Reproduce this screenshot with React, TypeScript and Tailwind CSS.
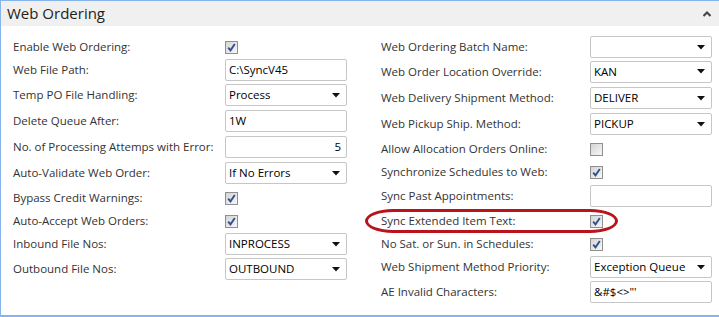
import type { ReactNode } from 'react';

type Field =
  | { kind: 'check'; checked: boolean }
  | { kind: 'text'; value: string; align?: 'right' }
  | { kind: 'select'; value: string };

interface Row {
  label: string;
  field: Field;
  h: string;
  circled?: boolean;
}

const leftRows: Row[] = [
  { label: 'Enable Web Ordering:', field: { kind: 'check', checked: true }, h: 'h-[22px]' },
  { label: 'Web File Path:', field: { kind: 'text', value: 'C:\\SyncV45' }, h: 'h-[24px]' },
  { label: 'Temp PO File Handling:', field: { kind: 'select', value: 'Process' }, h: 'h-[26px]' },
  { label: 'Delete Queue After:', field: { kind: 'text', value: '1W' }, h: 'h-[26px]' },
  { label: 'No. of Processing Attemps with Error:', field: { kind: 'text', value: '5', align: 'right' }, h: 'h-[26px]' },
  { label: 'Auto-Validate Web Order:', field: { kind: 'select', value: 'If No Errors' }, h: 'h-[26px]' },
  { label: 'Bypass Credit Warnings:', field: { kind: 'check', checked: true }, h: 'h-[24px]' },
  { label: 'Auto-Accept Web Orders:', field: { kind: 'check', checked: true }, h: 'h-[22px]' },
  { label: 'Inbound File Nos:', field: { kind: 'select', value: 'INPROCESS' }, h: 'h-[24px]' },
  { label: 'Outbound File Nos:', field: { kind: 'select', value: 'OUTBOUND' }, h: 'h-[26px]' },
];

const rightRows: Row[] = [
  { label: 'Web Ordering Batch Name:', field: { kind: 'select', value: '' }, h: 'h-[22px]' },
  { label: 'Web Order Location Override:', field: { kind: 'select', value: 'KAN' }, h: 'h-[27px]' },
  { label: 'Web Delivery Shipment Method:', field: { kind: 'select', value: 'DELIVER' }, h: 'h-[26px]' },
  { label: 'Web Pickup Ship. Method:', field: { kind: 'select', value: 'PICKUP' }, h: 'h-[26px]' },
  { label: 'Allow Allocation Orders Online:', field: { kind: 'check', checked: false }, h: 'h-[24px]' },
  { label: 'Synchronize Schedules to Web:', field: { kind: 'check', checked: true }, h: 'h-[22px]' },
  { label: 'Sync Past Appointments:', field: { kind: 'text', value: '' }, h: 'h-[26px]' },
  { label: 'Sync Extended Item Text:', field: { kind: 'check', checked: true }, h: 'h-[24px]', circled: true },
  { label: 'No Sat. or Sun. in Schedules:', field: { kind: 'check', checked: true }, h: 'h-[22px]' },
  { label: 'Web Shipment Method Priority:', field: { kind: 'select', value: 'Exception Queue' }, h: 'h-[24px]' },
  { label: 'AE Invalid Characters:', field: { kind: 'text', value: '&#$<>"\'' }, h: 'h-[26px]' },
];

function CheckBox({ checked }: { checked: boolean }) {
  return (
    <div className="w-[13px] h-[13px] border border-[#8f8f8f] bg-gradient-to-br from-[#d4d4d4] to-[#f7f7f7] flex items-center justify-center">
      {checked && (
        <svg width="9" height="9" viewBox="0 0 9 9">
          <path d="M1.2 4.6 L3.5 7.4 L7.8 1" fill="none" stroke="#33508f" strokeWidth="1.9" />
        </svg>
      )}
    </div>
  );
}

function Box({ children, right }: { children?: ReactNode; right?: boolean }) {
  return (
    <div
      className={`w-[122px] h-[22px] border border-[#c6c6c6] rounded-[2px] bg-white flex items-center px-[3px] text-[11.5px] text-black ${
        right ? 'justify-end' : 'justify-between'
      }`}
    >
      {children}
    </div>
  );
}

function FieldView({ field }: { field: Field }) {
  if (field.kind === 'check') return <CheckBox checked={field.checked} />;
  if (field.kind === 'text')
    return (
      <Box right={field.align === 'right'}>
        <span className="pr-[2px]">{field.value}</span>
      </Box>
    );
  return (
    <Box>
      <span>{field.value}</span>
      <svg width="8" height="5" viewBox="0 0 8 5" className="mr-[3px] shrink-0">
        <path d="M0 0 H8 L4 4.5 Z" fill="#111" />
      </svg>
    </Box>
  );
}

function Column({ rows, labelW }: { rows: Row[]; labelW: string }) {
  return (
    <div className="flex flex-col">
      {rows.map((r) => (
        <div key={r.label} className={`relative flex items-center ${r.h}`}>
          <div className={`${labelW} shrink-0 text-[11.5px] text-[#333]`}>{r.label}</div>
          <FieldView field={r.field} />
          {r.circled && (
            <div className="absolute left-[-16px] top-0 w-[253px] h-[24px] rounded-[28px/12px] border-[3px] border-[#b8141c]" />
          )}
        </div>
      ))}
    </div>
  );
}

export default function App() {
  return (
    <div className="w-[719px] h-[317px] bg-white" style={{ fontFamily: '"Open Sans", "Noto Sans", sans-serif' }}>
      <div className="h-[317px] border-t border-l border-b-2 border-[#88b4ec] flex flex-col">
        <div className="h-[25px] bg-[#f0f0f0] flex items-center justify-between pl-[6px] pr-[8px]">
          <span className="text-[15px] text-[#222]">Web Ordering</span>
          <svg width="8" height="6" viewBox="0 0 8 6">
            <path d="M0.5 5 L4 1.5 L7.5 5" fill="none" stroke="#444" strokeWidth="2" />
          </svg>
        </div>
        <div className="flex pt-[10px] pl-[12px]">
          <Column rows={leftRows} labelW="w-[212px]" />
          <div className="w-[34px] shrink-0" />
          <Column rows={rightRows} labelW="w-[209px]" />
        </div>
      </div>
    </div>
  );
}
